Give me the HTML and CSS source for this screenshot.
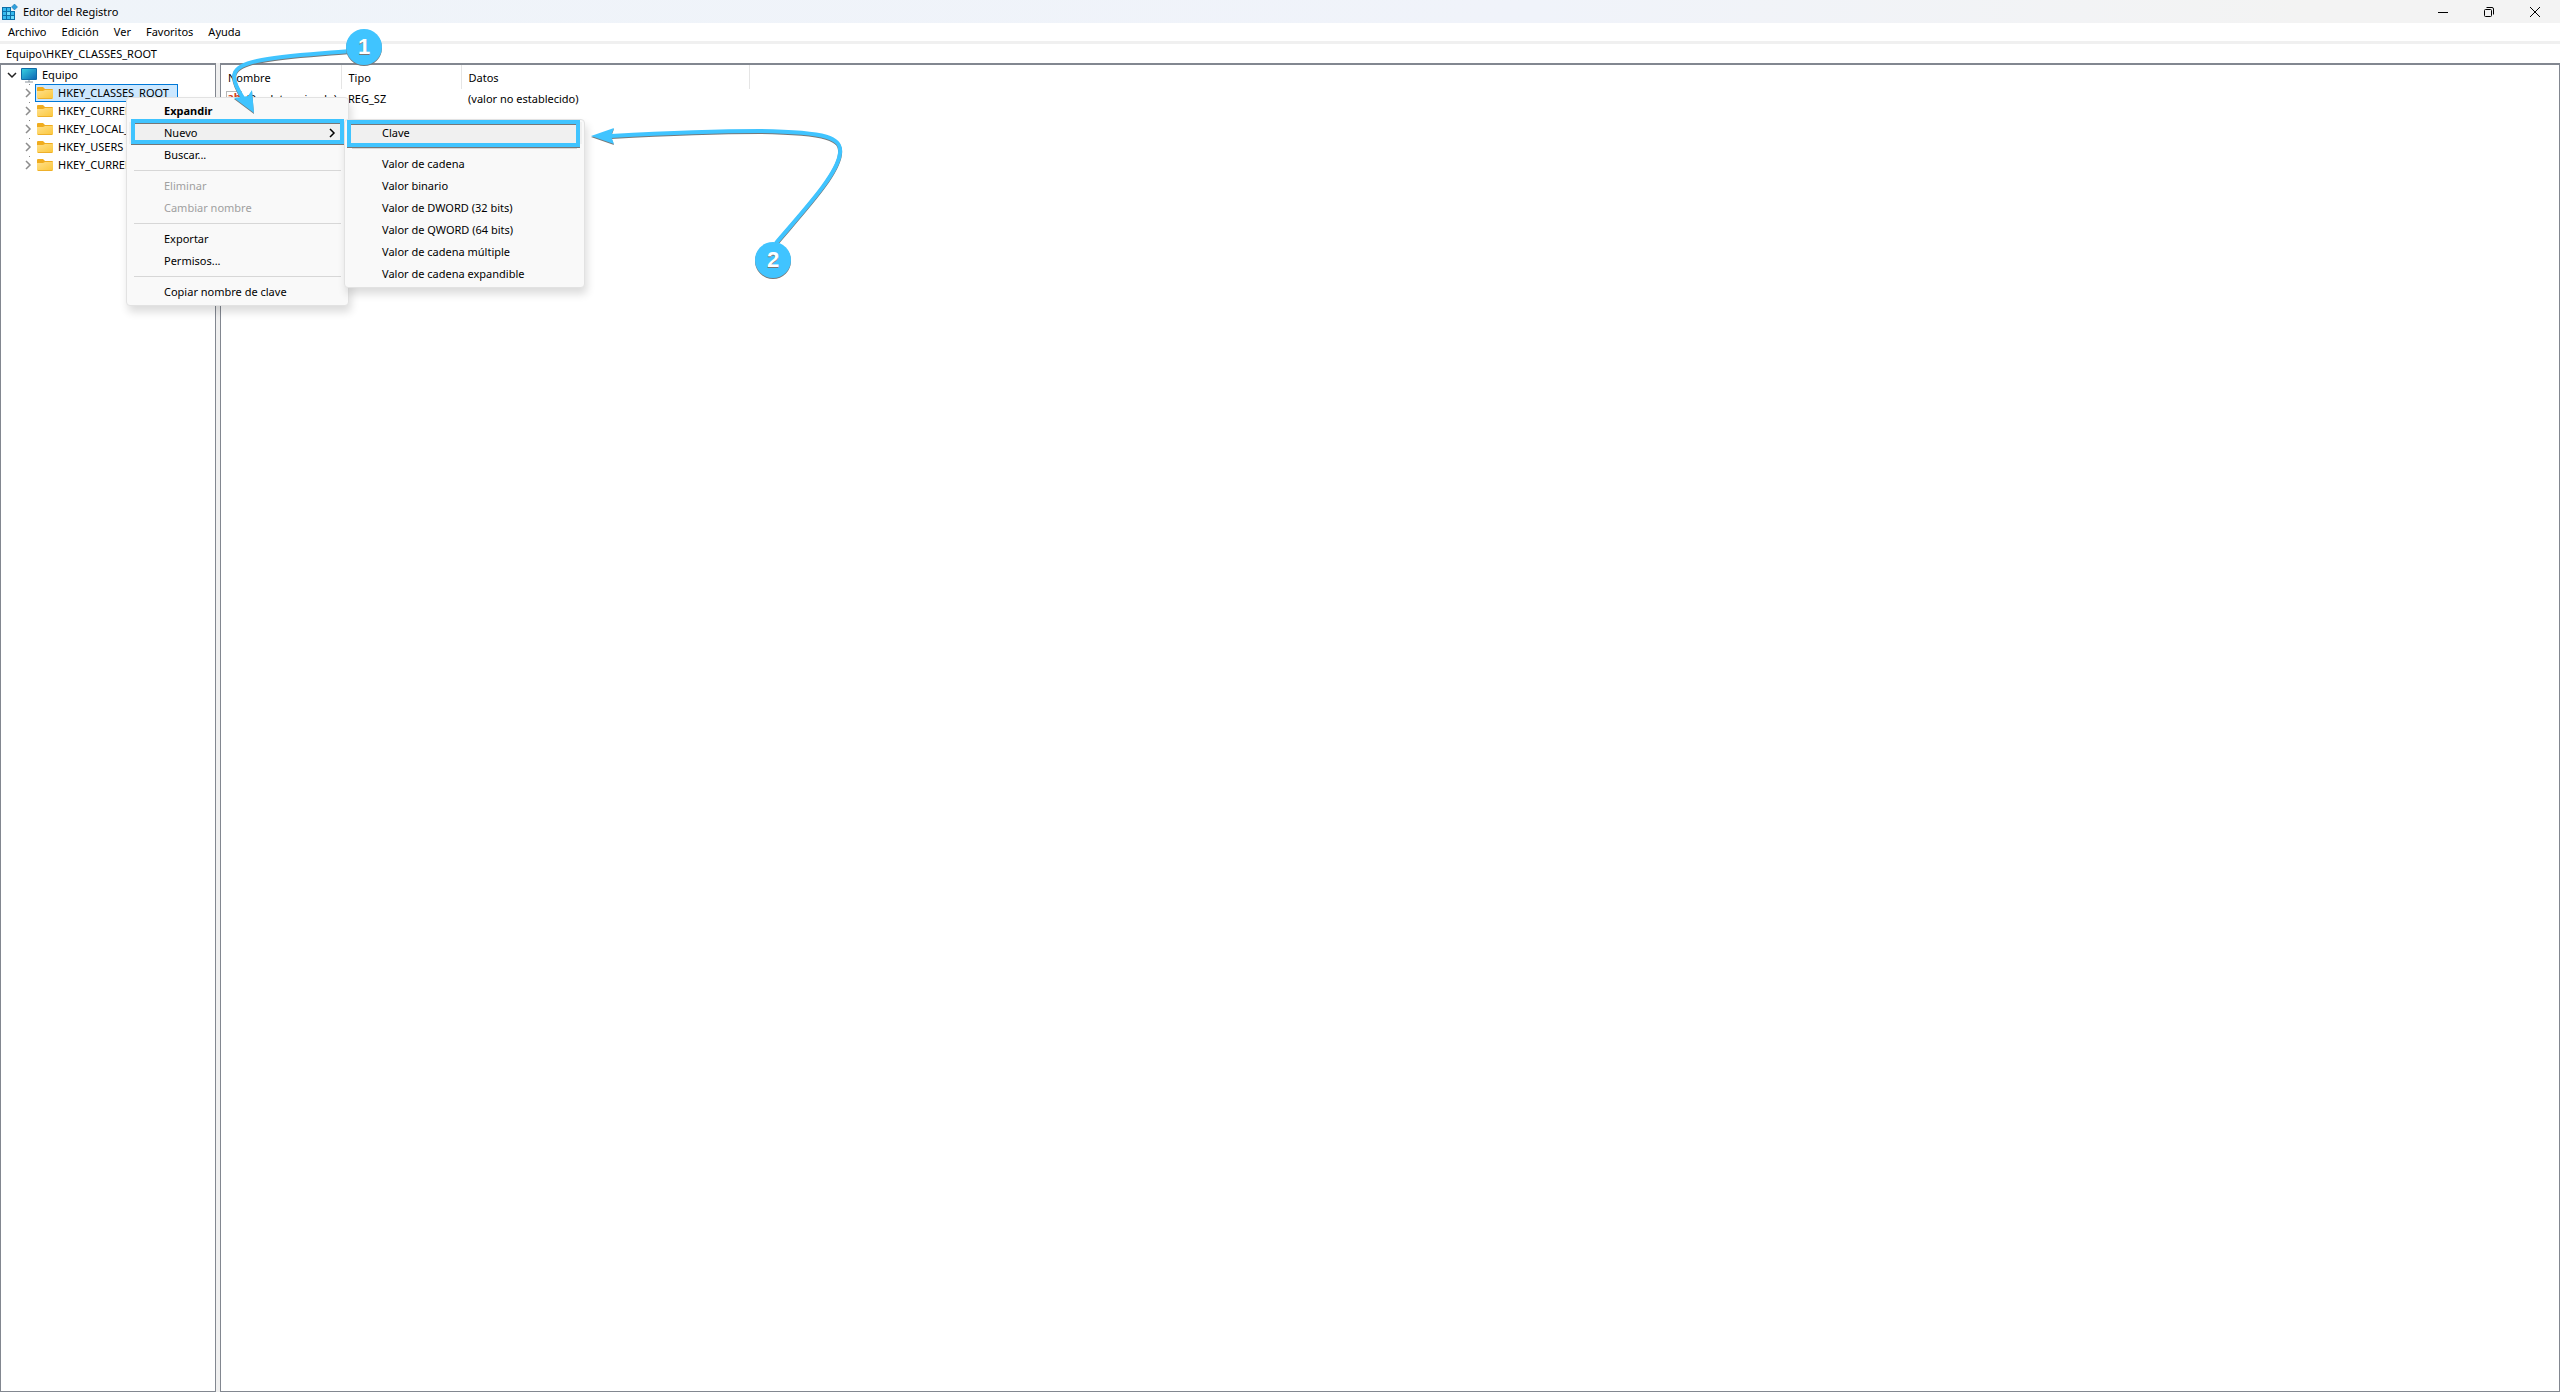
FILE: index.html
```
<!DOCTYPE html>
<html lang="es">
  <head>
    <meta charset="UTF-8" />
    <meta name="viewport" content="width=device-width, initial-scale=1.0" />
    <title>Editor del Registro</title>
    <link rel="stylesheet" href="styles.css">
  </head>
  <body>
    <!-- Shared icons -->
    <svg class="defs" aria-hidden="true">
      <linearGradient id="folderFill" x1="0" y1="0" x2="1" y2="1">
        <stop offset="0" stop-color="#ffe08a" />
        <stop offset="1" stop-color="#fbc63a" />
      </linearGradient>
      <linearGradient id="screenFill" x1="0" y1="0" x2="1" y2="1">
        <stop offset="0" stop-color="#35cfe0" />
        <stop offset="1" stop-color="#0d67b5" />
      </linearGradient>
      <symbol id="folder" viewBox="0 0 16 16">
        <path d="M0 3a1 1 0 0 1 1-1h5l2 2h7a1 1 0 0 1 1 1v4H0z" fill="#f0ac1e" />
        <path d="M0 6h6l2-1h8v8a1 1 0 0 1-1 1H1a1 1 0 0 1-1-1z" fill="url(#folderFill)" />
        <path d="M1 13.5h14" stroke="#eeb02b" />
      </symbol>
      <symbol id="chevron" viewBox="0 0 8 10">
        <path d="M2 1l4 4-4 4" fill="none" stroke="currentColor" stroke-width="1.5" />
      </symbol>
    </svg>

    <header class="titlebar">
      <svg class="app-icon" viewBox="0 0 16 16" aria-hidden="true">
        <path d="M0 3h9v4h4v9H0z" fill="#0b6ea8" />
        <path d="M1 4h3v3H1zM5 4h3v3H5zM1 8h3v3H1zM5 8h3v3H5zM9 8h3v3H9zM1 12h3v3H1zM5 12h3v3H5zM9 12h3v3H9z" fill="#35b9ee" />
        <path d="M5 8h3v3H5zM9 12h3v3H9z" fill="#6fdcfb" />
        <path d="M12.500 0l3 3-3 3-3-3z" fill="#2f9fdc" stroke="#0b6ea8" stroke-width=".5" />
      </svg>
      <h1>Editor del Registro</h1>
      <div class="window-buttons">
        <button type="button" aria-label="Minimizar">
          <svg viewBox="0 0 12 12"><path d="M1 6.500h10" /></svg>
        </button>
        <button type="button" aria-label="Restaurar">
          <svg viewBox="0 0 12 12"><rect x="1.500" y="3.500" width="7" height="7" rx="1" /><path d="M3.500 1.500H9q1.500 0 1.500 1.500v5.500" /></svg>
        </button>
        <button type="button" aria-label="Cerrar">
          <svg viewBox="0 0 12 12"><path d="M1 1l10 10M11 1L1 11" /></svg>
        </button>
      </div>
    </header>

    <nav class="menubar">
      <button type="button">Archivo</button>
      <button type="button">Edición</button>
      <button type="button">Ver</button>
      <button type="button">Favoritos</button>
      <button type="button">Ayuda</button>
    </nav>

    <input class="address" type="text" aria-label="Ruta" value="Equipo\HKEY_CLASSES_ROOT" />

    <main class="panes">
      <section class="tree">
        <div class="node root">
          <svg class="twisty open" viewBox="0 0 8 10"><use href="#chevron" /></svg>
          <svg class="icon" viewBox="0 0 16 16">
            <rect x="0" y="1" width="16" height="12" rx="1" fill="#0f6ba8" />
            <rect x="1" y="2" width="14" height="10" fill="url(#screenFill)" />
            <path d="M8 13v2M4 15h8" stroke="#8a949c" fill="none" />
          </svg>
          <span>Equipo</span>
        </div>
        <div class="node">
          <svg class="twisty"><use href="#chevron" /></svg>
          <span class="label selected"><svg class="icon"><use href="#folder" /></svg>HKEY_CLASSES_ROOT</span>
        </div>
        <div class="node">
          <svg class="twisty"><use href="#chevron" /></svg>
          <span class="label"><svg class="icon"><use href="#folder" /></svg>HKEY_CURRENT_USER</span>
        </div>
        <div class="node">
          <svg class="twisty"><use href="#chevron" /></svg>
          <span class="label"><svg class="icon"><use href="#folder" /></svg>HKEY_LOCAL_MACHINE</span>
        </div>
        <div class="node">
          <svg class="twisty"><use href="#chevron" /></svg>
          <span class="label"><svg class="icon"><use href="#folder" /></svg>HKEY_USERS</span>
        </div>
        <div class="node">
          <svg class="twisty"><use href="#chevron" /></svg>
          <span class="label"><svg class="icon"><use href="#folder" /></svg>HKEY_CURRENT_CONFIG</span>
        </div>
      </section>

      <section class="values">
        <table>
          <thead>
            <tr>
              <th class="col-name">Nombre</th>
              <th class="col-type">Tipo</th>
              <th class="col-data">Datos</th>
            </tr>
          </thead>
          <tbody>
            <tr>
              <td class="value-cell">
                <span class="value-name"><span class="string-icon">ab</span>(Predeterminado)</span>
              </td>
              <td>REG_SZ</td>
              <td>(valor no establecido)</td>
            </tr>
          </tbody>
        </table>
      </section>
    </main>

    <!-- Context menu of the selected key -->
    <div class="menu context-menu">
      <button type="button" class="default">Expandir</button>
      <button type="button" class="active">Nuevo <svg class="arrow"><use href="#chevron" /></svg></button>
      <button type="button">Buscar...</button>
      <hr />
      <button type="button" disabled>Eliminar</button>
      <button type="button" disabled>Cambiar nombre</button>
      <hr />
      <button type="button">Exportar</button>
      <button type="button">Permisos...</button>
      <hr />
      <button type="button">Copiar nombre de clave</button>
    </div>

    <div class="menu submenu">
      <button type="button" class="active">Clave</button>
      <hr />
      <button type="button">Valor de cadena</button>
      <button type="button">Valor binario</button>
      <button type="button">Valor de DWORD (32 bits)</button>
      <button type="button">Valor de QWORD (64 bits)</button>
      <button type="button">Valor de cadena múltiple</button>
      <button type="button">Valor de cadena expandible</button>
    </div>

    <!-- Step marks -->
    <div class="frame frame-new"></div>
    <div class="frame frame-key"></div>
    <svg class="arrows" viewBox="0 0 900 300" aria-hidden="true">
      <path class="line" d="M350 51C318 54 282 55 257 61C230 67 229 76 243 98" />
      <path class="head" d="M254 113L234 98l8-1 6-1 4-6z" />
      <path class="line" d="M611 136C665 133 715 131 760 131C828 132 842 138 840 153C838 174 804 210 776 243" />
      <path class="head" d="M591 136l23-8-3 8 3 8z" />
    </svg>
    <span class="step step-1">1</span>
    <span class="step step-2">2</span>
  </body>
</html>
```
FILE: styles.css
```
* {
  margin: 0;
  padding: 0;
  box-sizing: border-box;
}
body {
  position: relative;
  display: flex;
  flex-direction: column;
  height: 100vh;
  overflow: hidden;
  background-color: #fff;
  color: #000;
  font-family: "Noto Sans", "Open Sans", sans-serif;
  font-size: 11px;
  line-height: 18px;
}
button,
input {
  border: none;
  background: none;
  color: inherit;
  font: inherit;
}
.defs {
  position: absolute;
  width: 0;
  height: 0;
}

/* Title bar */
.titlebar {
  display: flex;
  align-items: center;
  height: 23px;
  padding: 0 2px;
  background: linear-gradient(to right, #eff4f9, #f0f3fa 60%, #f3f3f3 90%);
}
.app-icon {
  width: 16px;
  height: 16px;
  margin-right: 5px;
}
.titlebar h1 {
  flex: 1;
  font-size: 11px;
  font-weight: normal;
}
.window-buttons {
  display: flex;
}
.window-buttons button {
  display: flex;
  align-items: center;
  justify-content: center;
  width: 46px;
  height: 20px;
}
.window-buttons svg {
  width: 12px;
  height: 12px;
  fill: none;
  stroke: #000;
}

/* Menu bar and address */
.menubar {
  display: flex;
  gap: 15px;
  height: 21px;
  padding-left: 8px;
  border-bottom: 3px solid #f0f0f0;
}
.address {
  height: 19px;
  padding-left: 6px;
}

/* Panes */
.panes {
  flex: 1;
  display: flex;
  gap: 4px;
  background-color: #f0f0f0;
}
.tree,
.values {
  border: 1px solid #828790;
  border-top-width: 2px;
  background-color: #fff;
}
.tree {
  width: 216px;
  padding-top: 1px;
}
.values {
  flex: 1;
}
.node {
  display: flex;
  align-items: center;
  height: 18px;
  padding-left: 23px;
  background: linear-gradient(#888, #888) 28px 0 / 1px 1px no-repeat;
}
.node.root {
  padding-left: 7px;
  background: none;
}
.twisty {
  width: 8px;
  height: 10px;
  margin-right: 3px;
  color: #8c8c8c;
}
.twisty.open {
  margin-right: 5px;
  color: #222;
  transform: rotate(90deg);
}
.icon {
  width: 16px;
  height: 16px;
  margin-right: 5px;
}
.label {
  display: flex;
  align-items: center;
  height: 18px;
  padding: 0 8px 0 1px;
  border: 1px solid transparent;
}
.label.selected {
  border-color: #0078d7;
  background-color: #cce8ff;
}
table {
  border-collapse: collapse;
  table-layout: fixed;
  width: 529px;
}
th,
td {
  padding-left: 7px;
  text-align: left;
  font-weight: normal;
  white-space: nowrap;
}
th {
  height: 24px;
  padding-top: 1px;
  border-right: 1px solid #e5e5e5;
}
td {
  height: 20px;
}
.value-cell {
  padding-left: 5px;
}
.col-name {
  width: 120px;
}
.col-type {
  width: 120px;
}
.value-name {
  display: flex;
  align-items: center;
  gap: 4px;
}
.string-icon {
  width: 16px;
  height: 16px;
  border: 1px solid #b8b8b8;
  color: #d3401f;
  font-weight: bold;
  line-height: 9px;
  text-align: center;
}

/* Popup menus */
.menu {
  position: absolute;
  display: flex;
  flex-direction: column;
  padding: 2px;
  border: 1px solid #e2e2e2;
  border-radius: 4px;
  background-color: #f9f9f9;
  box-shadow: 2px 6px 8px rgba(0, 0, 0, 0.14);
}
.menu button {
  display: flex;
  align-items: center;
  justify-content: space-between;
  height: 22px;
  padding: 0 10px 0 35px;
  text-align: left;
}
.menu button.active {
  background-color: #f0f0f0;
}
.menu button.default {
  font-weight: bold;
}
.menu button:disabled {
  color: #a0a0a0;
}
.menu hr {
  height: 1px;
  margin: 4px 5px;
  border: none;
  background-color: #d7d7d7;
}
.menu .arrow {
  width: 8px;
  height: 10px;
}
.context-menu {
  left: 126px;
  top: 97px;
  width: 223px;
}
.submenu {
  left: 344px;
  top: 119px;
  width: 241px;
}

/* Step marks */
.frame {
  position: absolute;
  border: 4px solid #40c4ff;
  box-shadow: 0 1px 0 #777, inset 0 1px 0 #777;
}
.frame-new {
  left: 131px;
  top: 119px;
  width: 213px;
  height: 25px;
}
.frame-key {
  left: 347px;
  top: 120px;
  width: 233px;
  height: 27px;
}
.arrows {
  position: absolute;
  left: 0;
  top: 0;
  width: 900px;
  height: 300px;
  filter: drop-shadow(0 1px 0 #777);
  pointer-events: none;
}
.arrows .line {
  fill: none;
  stroke: #40c4ff;
  stroke-width: 4;
}
.arrows .head {
  fill: #40c4ff;
}
.step {
  position: absolute;
  width: 36px;
  height: 36px;
  border-radius: 50%;
  background-color: #40c4ff;
  box-shadow: 0 1px 0 #777;
  color: #fff;
  font-family: "Liberation Sans", Arial, sans-serif;
  font-size: 22px;
  font-weight: bold;
  line-height: 35px;
  text-align: center;
  text-shadow: 0 1px 0 #777;
}
.step-1 {
  left: 346px;
  top: 29px;
}
.step-2 {
  left: 755px;
  top: 242px;
}
```
